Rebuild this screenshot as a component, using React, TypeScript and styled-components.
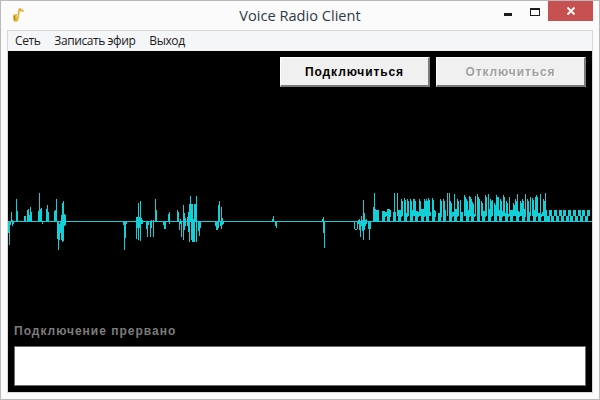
import React from "react";
import styled, { createGlobalStyle } from "styled-components";

const Global = createGlobalStyle`
  html, body { margin: 0; padding: 0; background: #fbfbfb; }
  #root { width: 600px; height: 400px; }
`;

const Window = styled.div`
  box-sizing: border-box;
  width: 600px;
  height: 400px;
  border: 1px solid #b9b9b9;
  background: #fbfbfb;
  display: flex;
  flex-direction: column;
  padding: 0 6px 6px 6px;
  overflow: hidden;
`;

const TitleBar = styled.header`
  height: 29px;
  flex: none;
  position: relative;
  display: flex;
  justify-content: center;
  align-items: center;
`;

const AppIcon = styled.svg`
  position: absolute;
  left: 4px;
  top: 6px;
  width: 14px;
  height: 15px;
`;

const Title = styled.h1`
  margin: 0;
  font: 400 14.6px "Open Sans", "Noto Sans", sans-serif;
  color: #2f3a45;
  line-height: 29px;
`;

const WindowControls = styled.div`
  position: absolute;
  right: 0;
  top: 0;
  display: flex;
  align-items: flex-start;
`;

const CtrlButton = styled.div<{ $w: number }>`
  width: ${(p) => p.$w}px;
  height: 20px;
  display: flex;
  align-items: center;
  justify-content: center;
`;

const CloseButton = styled(CtrlButton)`
  background: #c75050;
`;

const Minimize = styled.i`
  display: block;
  width: 8px;
  height: 3px;
  background: #1c1c1c;
  margin: 7px 2px 0 0;
`;

const Maximize = styled.i`
  display: block;
  box-sizing: border-box;
  width: 10px;
  height: 8px;
  border: 1px solid #1c1c1c;
  border-top-width: 2px;
  margin-top: 2px;
`;

const Client = styled.div`
  flex: 1;
  display: flex;
  flex-direction: column;
  min-height: 0;
  border: 1px solid #d8d8d8;
`;

const MenuBar = styled.nav`
  height: 19px;
  flex: none;
  background: #f5f6f7;
  display: flex;
  align-items: center;
  padding-left: 7px;
  gap: 14px;
  border-bottom: 1px solid #f0f0f0;
  font: 400 12px "Open Sans", "Noto Sans", sans-serif;
  color: #1b1b1b;
`;

const MenuItem = styled.span`
  line-height: 19px;
  letter-spacing: -0.42px;
`;

const Panel = styled.main`
  flex: 1;
  min-height: 0;
  background: #000;
  display: flex;
  flex-direction: column;
  padding: 6px;
`;

const ButtonRow = styled.div`
  display: flex;
  justify-content: flex-end;
  gap: 6px;
  flex: none;
`;

const ActionButton = styled.button`
  box-sizing: border-box;
  width: 150px;
  height: 30px;
  margin: 0;
  padding: 0;
  background: #f0f0f0;
  border-style: solid;
  border-width: 1px 2px 2px 1px;
  border-color: #fff #7a7a7a #7a7a7a #fff;
  font: 700 12px "Liberation Sans", Arial, sans-serif;
  letter-spacing: 0.9px;
  color: ${(p) => (p.disabled ? "#a0a0a0" : "#000")};
  text-shadow: ${(p) => (p.disabled ? "1px 1px 0 #fff" : "none")};
`;

const Scope = styled.svg`
  display: block;
  flex: none;
  width: 584px;
  height: 100px;
  margin: 84px -6px 0;
`;

const Status = styled.div`
  flex: none;
  margin-top: 52px;
  font: 700 12px "Liberation Sans", Arial, sans-serif;
  letter-spacing: 1px;
  line-height: 16px;
  color: #7c7c7c;
`;

const Output = styled.div`
  box-sizing: border-box;
  flex: none;
  margin-top: 7px;
  height: 40px;
  background: #fff;
  border: 1px solid #6e6e6e;
`;

type Bar = [number, number, number];

const sparse: Bar[] = [
  [8, 221, 233], [9, 221, 245], [10, 221, 225], [11, 212, 221], [12, 220, 226], [13, 221, 224],
  [16, 199, 221], [17, 211, 221], [24, 216, 221], [25, 216, 221], [27, 210, 221], [28, 209, 221],
  [29, 215, 221], [30, 207, 221], [31, 212, 221], [38, 211, 221], [39, 193, 221], [40, 209, 221],
  [41, 208, 221], [42, 221, 224], [46, 209, 221], [47, 205, 221], [48, 212, 221], [54, 211, 221],
  [55, 210, 221], [56, 199, 221], [57, 221, 239], [58, 221, 250], [59, 224, 240], [60, 221, 233],
  [61, 215, 240], [62, 203, 242], [63, 201, 241], [64, 214, 226], [65, 215, 225],
  [123, 221, 225], [124, 221, 250], [125, 221, 238], [126, 221, 224],
  [136, 217, 239], [137, 217, 228], [138, 203, 240], [139, 217, 228], [140, 201, 241], [141, 218, 224],
  [142, 220, 224], [146, 221, 229], [147, 221, 237], [148, 221, 225], [150, 221, 237], [151, 220, 228],
  [153, 220, 237], [155, 199, 221], [156, 210, 221], [163, 221, 225], [164, 221, 229], [165, 221, 229],
  [168, 214, 221], [169, 212, 224], [177, 210, 221], [178, 212, 221], [179, 221, 230], [180, 219, 224],
  [181, 221, 237], [183, 205, 240], [184, 213, 230], [185, 218, 226], [187, 217, 226], [188, 212, 232],
  [189, 204, 242], [190, 196, 221], [191, 204, 240], [192, 204, 242], [193, 219, 242], [194, 204, 242],
  [195, 204, 222], [196, 196, 242], [198, 221, 231], [199, 221, 236], [200, 221, 228],
  [215, 221, 226], [216, 221, 230], [217, 221, 230], [218, 205, 228], [219, 201, 222], [220, 221, 226],
  [221, 207, 229], [222, 218, 225], [223, 221, 224],
  [272, 219, 221], [273, 216, 221], [275, 221, 226], [276, 221, 228],
  [322, 219, 221], [323, 217, 233], [324, 221, 248],
  [354, 221, 229], [355, 229, 230], [356, 229, 230], [357, 221, 229], [358, 220, 224], [359, 219, 230],
  [360, 221, 237], [361, 216, 226], [362, 220, 231], [363, 200, 240], [364, 213, 230], [365, 220, 226],
  [366, 219, 224], [368, 221, 229], [369, 221, 240], [370, 221, 229], [373, 207, 221], [374, 193, 221],
  [375, 209, 221],
];

const spikes: [number, number][] = [
  [13, 25], [22, 25], [33, 42], [43, 40], [50, 42], [60, 42], [68, 42], [72, 42], [87, 42], [102, 42],
  [107, 42], [114, 40], [126, 40], [150, 42], [159, 42], [171, 25], [178, 25], [181, 48], [192, 28],
  [201, 42], [210, 45], [222, 30], [228, 42], [237, 32], [240, 36], [246, 50], [255, 33], [261, 28],
  [264, 36], [273, 48], [285, 30], [294, 28], [300, 42], [306, 45], [312, 54], [319, 30], [325, 35],
  [330, 42], [339, 30], [348, 48], [357, 35], [369, 54], [375, 42], [381, 28], [390, 48], [396, 42],
  [405, 28], [411, 42], [420, 35], [426, 40], [435, 35], [438, 30], [450, 28], [459, 42], [465, 25],
];

const levels = [210, 211, 209, 212, 210, 213];

const buildBars = (): Bar[] => {
  const bars: Bar[] = [...sparse];
  let n = 0;
  for (let p = 376; p < 545; p += 5.6, n++) {
    const start = Math.round(p);
    const top = levels[n % levels.length];
    for (let i = 0; i < 3; i++) bars.push([start + i, top, 222]);
    if (n % 3 !== 0) bars.push([start + 3, top + 1, 217]);
    if (n % 4 === 1) bars.push([start + 4, 212, 216]);
  }
  for (const [z, top] of spikes) {
    const x = 390 + Math.round(z / 3);
    const y = 185 + Math.round(top / 3);
    bars.push([x, y, 216]);
    if (top >= 30 && top % 2 === 0) bars.push([x + 1, y + 2, 216]);
  }
  for (let p = 549; p < 590; p += 4.75) {
    const start = Math.round(p);
    for (let i = 0; i < 3; i++) bars.push([start + i, 210, 216]);
    const low = Math.round(p - 2.4);
    for (let i = 0; i < 3; i++) bars.push([low + i, 216, 222]);
  }
  return bars;
};

const ORIGIN_X = 8;
const ORIGIN_Y = 171;

const wavePath = buildBars()
  .map(([x, a, b]) => `M${x - ORIGIN_X + 0.5} ${a - ORIGIN_Y}V${b - ORIGIN_Y}`)
  .join("");

export default function App() {
  return (
    <>
      <Global />
      <Window>
        <TitleBar>
          <AppIcon viewBox="0 0 14 15">
            <path
              d="M12.5 3.5 L9 1.2 L7.6 2 L6.6 10 C6.2 11 5.5 11 5.4 10 L5.6 7 L2.4 8 L2.4 13 C3 15 6 15.2 7 13 L8.6 4 L12.5 4.4 Z"
              fill="#e8bd2c"
              stroke="#c79a18"
              strokeWidth="0.4"
            />
            <path d="M3.4 9 L4 13" stroke="#a67f12" strokeWidth="1" fill="none" />
          </AppIcon>
          <Title>Voice Radio Client</Title>
          <WindowControls>
            <CtrlButton $w={26}><Minimize /></CtrlButton>
            <CtrlButton $w={26}><Maximize /></CtrlButton>
            <CloseButton $w={45}>
              <svg width="10" height="10" viewBox="0 0 10 10">
                <path d="M1.5 1.5 L8.5 8.5 M8.5 1.5 L1.5 8.5" stroke="#fff" strokeWidth="1.8" />
              </svg>
            </CloseButton>
          </WindowControls>
        </TitleBar>
        <Client>
          <MenuBar>
            <MenuItem>Сеть</MenuItem>
            <MenuItem>Записать эфир</MenuItem>
            <MenuItem>Выход</MenuItem>
          </MenuBar>
          <Panel>
            <ButtonRow>
              <ActionButton>Подключиться</ActionButton>
              <ActionButton disabled>Отключиться</ActionButton>
            </ButtonRow>
            <Scope viewBox="0 0 584 100" shapeRendering="crispEdges">
              <path d="M0 50.5H584" stroke="#12d0d8" strokeWidth="1" fill="none" />
              <path d={wavePath} stroke="#12d0d8" strokeWidth="1" fill="none" />
            </Scope>
            <Status>Подключение прервано</Status>
            <Output />
          </Panel>
        </Client>
      </Window>
    </>
  );
}
